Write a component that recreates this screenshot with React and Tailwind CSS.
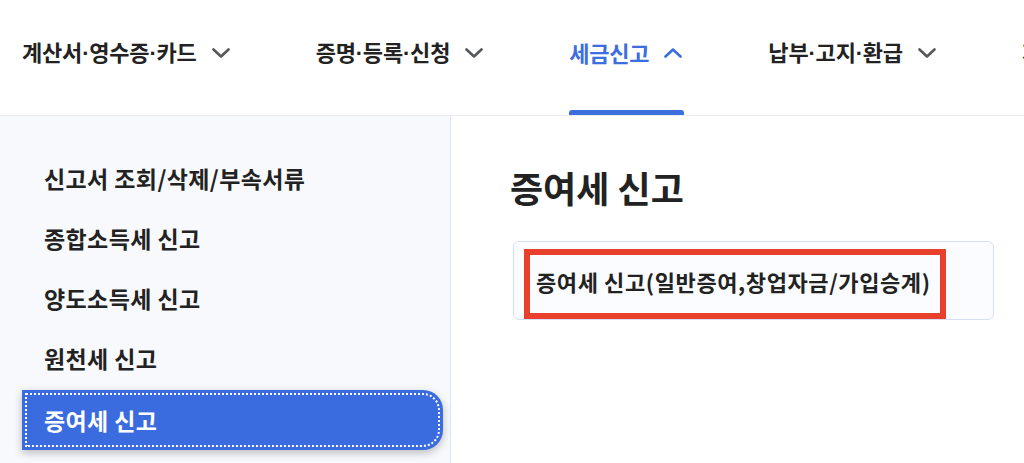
const font = { fontFamily: '"Noto Sans CJK KR", "Noto Sans", sans-serif' };

const navItems = [
  { label: "계산서·영수증·카드" },
  { label: "증명·등록·신청" },
  { label: "세금신고", active: true },
  { label: "납부·고지·환급" },
  { label: "지급명세·자료제출" },
];

const sideItems = [
  "신고서 조회/삭제/부속서류",
  "종합소득세 신고",
  "양도소득세 신고",
  "원천세 신고",
  "증여세 신고",
];

function Chevron({ up, className }) {
  return (
    <svg width="18" height="10" viewBox="0 0 18 10" fill="none" className={className}>
      <polyline
        points={up ? "1.5,8.5 9,1.5 16.5,8.5" : "1.5,1.5 9,8.5 16.5,1.5"}
        stroke="currentColor"
        strokeWidth="2.6"
        strokeLinecap="round"
        strokeLinejoin="round"
      />
    </svg>
  );
}

// narrow middle dot, as in the original menu
function Label({ text }) {
  const parts = text.split("·");
  return parts.map((p, i) => (
    <span key={i}>
      {i > 0 && <span className="font-['Liberation_Sans']">·</span>}
      {p}
    </span>
  ));
}

function NavItem({ label, active }) {
  return (
    <div className="relative h-full flex items-center gap-[15px] pb-[11px] shrink-0">
      <span
        className={
          "text-[22px] font-bold tracking-[-0.2px] " +
          (active ? "text-[#3c6ee0]" : "text-[#222]")
        }
      >
        <Label text={label} />
      </span>
      {active ? (
        <Chevron up className="text-[#3c6ee0] mt-[1px]" />
      ) : (
        <Chevron className="text-[#55575c] mt-[1px]" />
      )}
      {active && (
        <span className="absolute left-0 -right-[2px] bottom-0 h-[5px] rounded-t-[3px] bg-[#3c6ee0]" />
      )}
    </div>
  );
}

export default function App() {
  return (
    <div className="w-[1024px] h-[463px] overflow-hidden bg-white flex flex-col" style={font}>
      <header className="h-[116px] shrink-0 border-b border-[#ececec] overflow-hidden">
        <nav className="h-[115px] flex pl-[22px] gap-[86px] whitespace-nowrap">
          {navItems.map((n) => (
            <NavItem key={n.label} {...n} />
          ))}
        </nav>
      </header>

      <div className="flex flex-1 min-h-0">
        <aside className="w-[451px] shrink-0 bg-[#f8f9fc] border-r border-[#dfe7f6] pt-[32px] pl-[22px] pr-[7px]">
          <ul>
            {sideItems.map((s) => {
              const active = s === "증여세 신고";
              return (
                <li
                  key={s}
                  className={
                    "h-[60px] flex items-center px-[22px] text-[23px] font-bold tracking-[0.4px] " +
                    (active
                      ? "mt-[2px] bg-[#3a6ce0] text-white rounded-r-[20px] outline-2 outline-dotted outline-white -outline-offset-[5px] shadow-[0_3px_8px_rgba(0,0,0,0.25)]"
                      : "text-[#222]")
                  }
                >
                  {s}
                </li>
              );
            })}
          </ul>
        </aside>

        <main className="flex-1 pl-[62px] pt-[49px]">
          <h2 className="-ml-[3px] text-[36px] leading-[44px] font-bold text-[#222]">증여세 신고</h2>
          <div className="mt-[32px] w-[481px] h-[79px] border border-[#d5e0f7] rounded-[6px] bg-[#fbfcff] pl-[10px] pt-[7px]">
            <a className="h-[70px] w-[422px] border-[6px] border-[#e8402a] flex items-center pl-[6px] pb-[6px] text-[22px] font-bold text-[#222] tracking-[0.6px] whitespace-nowrap">
              증여세 신고(일반증여,창업자금/가입승계)
            </a>
          </div>
        </main>
      </div>
    </div>
  );
}
